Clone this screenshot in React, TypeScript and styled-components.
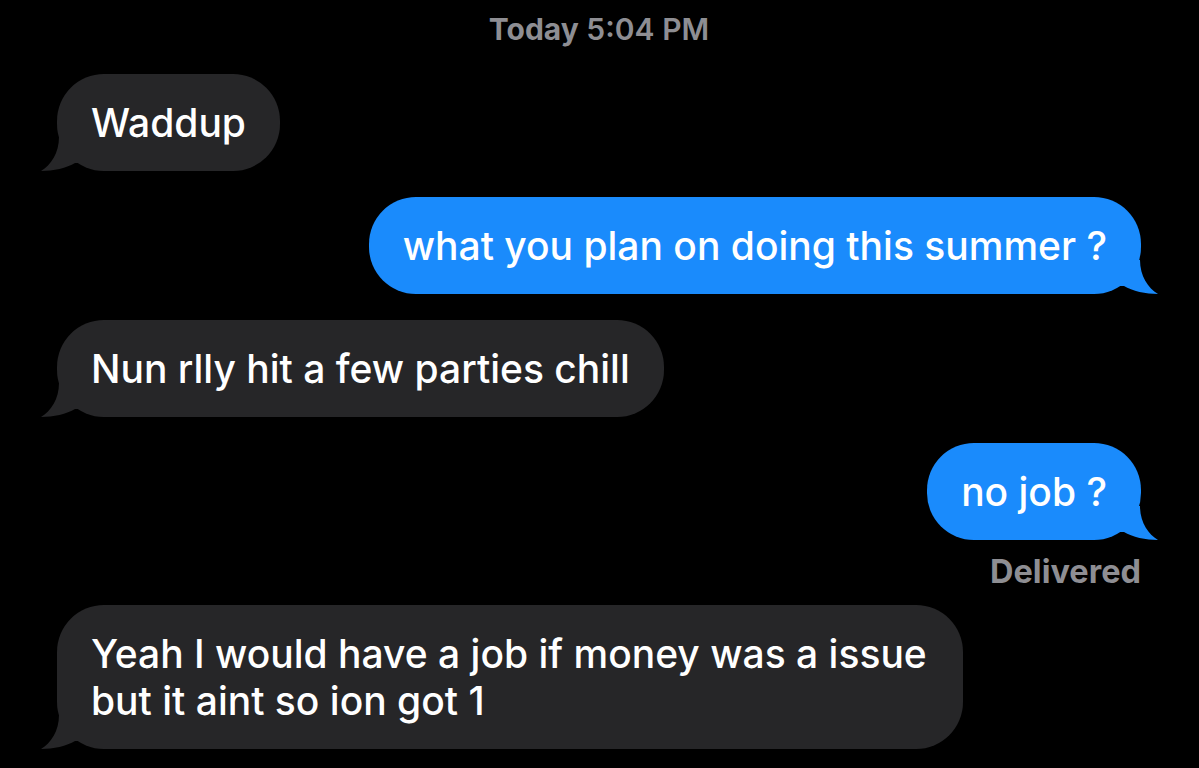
import React from "react";
import styled, { createGlobalStyle } from "styled-components";

const GREY = "#262628";
const BLUE = "#1a8bfc";

const GlobalStyle = createGlobalStyle`
  html, body {
    margin: 0;
    padding: 0;
    background: #000;
  }
  body {
    font-family: Inter, "Noto Sans", "Liberation Sans", sans-serif;
    -webkit-font-smoothing: antialiased;
  }
`;

const Screen = styled.div`
  display: flex;
  flex-direction: column;
  box-sizing: border-box;
  width: 1199px;
  height: 768px;
  overflow: hidden;
  padding: 12px 58px 0 57px;
  background: #000;
`;

const Timestamp = styled.div`
  text-align: center;
  font-size: 30px;
  line-height: 34px;
  color: #8e8e93;
  font-weight: 600;
  margin-bottom: 28px;

  b {
    font-weight: 700;
  }
`;

const Row = styled.div<{ $mine?: boolean; $first?: boolean }>`
  display: flex;
  justify-content: ${(p) => (p.$mine ? "flex-end" : "flex-start")};
  margin-top: ${(p) => (p.$first ? "0" : "26px")};
`;

const Bubble = styled.div<{ $mine?: boolean }>`
  position: relative;
  box-sizing: border-box;
  max-width: 906px;
  padding: 25px 34px;
  border-radius: 47px;
  background: ${(p) => (p.$mine ? BLUE : GREY)};
  color: #fff;
  font-size: 39px;
  line-height: 47px;
  font-weight: 500;
`;

const Text = styled.span`
  position: relative;
`;

const Tail = styled.svg<{ $mine?: boolean }>`
  position: absolute;
  bottom: 0;
  width: 60px;
  height: 34px;
  ${(p) =>
    p.$mine
      ? "right: -17px; transform: scaleX(-1);"
      : "left: -16px;"}
`;

const Status = styled.div`
  align-self: flex-end;
  margin-top: 15px;
  margin-bottom: -10px;
  font-size: 32.5px;
  line-height: 34px;
  font-weight: 700;
  color: #8e8e93;
`;

type Msg = { text: React.ReactNode; mine?: boolean; first?: boolean };

const BubbleTail = ({ mine }: { mine?: boolean }) => (
  <Tail $mine={mine} viewBox="0 0 60 34">
    <path
      d="M18 0 C18 16 10 28 0 34 C12 34 26 31 34 26 L60 26 L60 0 Z"
      fill={mine ? BLUE : GREY}
    />
  </Tail>
);

const Message = ({ text, mine, first }: Msg) => (
  <Row $mine={mine} $first={first}>
    <Bubble $mine={mine}>
      <BubbleTail mine={mine} />
      <Text>{text}</Text>
    </Bubble>
  </Row>
);

const App = () => {
  return (
    <>
      <GlobalStyle />
      <Screen>
        <Timestamp>
          <b>Today</b> 5:04 PM
        </Timestamp>
        <Message first text="Waddup" />
        <Message mine text="what you plan on doing this summer ?" />
        <Message text="Nun rlly hit a few parties chill" />
        <Message mine text="no job ?" />
        <Status>Delivered</Status>
        <Message text="Yeah I would have a job if money was a issue but it aint so ion got 1" />
      </Screen>
    </>
  );
};

export default App;
